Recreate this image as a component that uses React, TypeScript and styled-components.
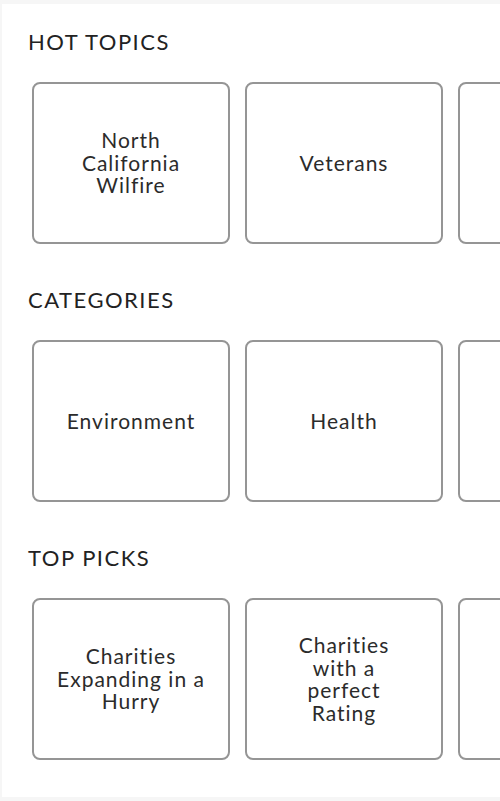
import React from "react";
import styled, { createGlobalStyle } from "styled-components";

const GlobalStyle = createGlobalStyle`
  html, body {
    margin: 0;
    padding: 0;
    background: #f6f6f6;
  }
  body {
    font-family: Lato, "Noto Sans", "Liberation Sans", sans-serif;
    color: #222;
    overflow: hidden;
  }
`;

const Page = styled.main`
  margin: 4px 0 4px 2px;
  height: 793px;
  background: #ffffff;
  padding-top: 25px;
  box-sizing: border-box;
  display: flex;
  flex-direction: column;
  gap: 43px;
  overflow: hidden;
`;

const Section = styled.section`
  display: flex;
  flex-direction: column;
  gap: 27px;
`;

const Heading = styled.h2`
  margin: 0;
  padding-left: 26px;
  font-size: 22px;
  line-height: 26px;
  font-weight: 400;
  letter-spacing: 1.5px;
  color: #222;
`;

const Row = styled.div`
  display: flex;
  gap: 15px;
  padding-left: 30px;
  overflow: hidden;
`;

const Card = styled.button`
  flex: 0 0 198px;
  height: 162px;
  box-sizing: border-box;
  border: 2px solid #959595;
  border-radius: 8px;
  background: #fff;
  display: flex;
  align-items: center;
  justify-content: center;
  padding: 0 12px;
  cursor: pointer;
`;

const Label = styled.span`
  display: block;
  white-space: nowrap;
  font-family: Lato, "Noto Sans", "Liberation Sans", sans-serif;
  font-size: 21px;
  line-height: 22.5px;
  letter-spacing: 1px;
  color: #2b2b2b;
  text-align: center;
`;

type Topic = { lines: string[] };
type Group = { title: string; items: Topic[] };

const groups: Group[] = [
  {
    title: "HOT TOPICS",
    items: [
      { lines: ["North", "California", "Wilfire"] },
      { lines: ["Veterans"] },
      { lines: [] },
    ],
  },
  {
    title: "CATEGORIES",
    items: [{ lines: ["Environment"] }, { lines: ["Health"] }, { lines: [] }],
  },
  {
    title: "TOP PICKS",
    items: [
      { lines: ["Charities", "Expanding in a", "Hurry"] },
      { lines: ["Charities", "with a", "perfect", "Rating"] },
      { lines: [] },
    ],
  },
];

export default function App() {
  return (
    <>
      <GlobalStyle />
      <Page>
        {groups.map((g) => (
          <Section key={g.title}>
            <Heading>{g.title}</Heading>
            <Row>
              {g.items.map((it, i) => (
                <Card key={i} aria-label={it.lines.join(" ") || "More"}>
                  {it.lines.length > 0 && (
                    <Label>
                      {it.lines.map((l, j) => (
                        <React.Fragment key={j}>
                          {j > 0 && <br />}
                          {l}
                        </React.Fragment>
                      ))}
                    </Label>
                  )}
                </Card>
              ))}
            </Row>
          </Section>
        ))}
      </Page>
    </>
  );
}
